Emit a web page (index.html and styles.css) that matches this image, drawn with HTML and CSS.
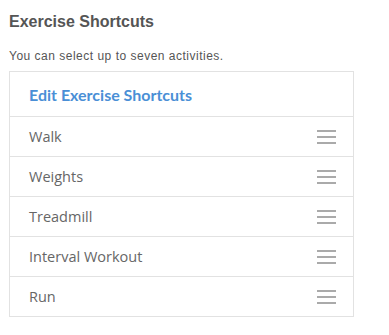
FILE: index.html
```html
<!DOCTYPE html>
<html lang="en">
<head>
    <meta charset="UTF-8">
    <meta name="viewport" content="width=device-width, initial-scale=1.0">
    <title>Exercise Shortcuts</title>
    <link rel="stylesheet" href="styles.css">
</head>
<body>
    <div class="panel">
        <h2 class="title">Exercise Shortcuts</h2>
        <p class="hint">You can select up to seven activities.</p>
        <div class="list">
            <div class="list-head">Edit Exercise Shortcuts</div>
            <div class="item"><span>Walk</span><span class="grip"><i></i><i></i><i></i></span></div>
            <div class="item"><span>Weights</span><span class="grip"><i></i><i></i><i></i></span></div>
            <div class="item"><span>Treadmill</span><span class="grip"><i></i><i></i><i></i></span></div>
            <div class="item"><span>Interval Workout</span><span class="grip"><i></i><i></i><i></i></span></div>
            <div class="item"><span>Run</span><span class="grip"><i></i><i></i><i></i></span></div>
        </div>
    </div>
</body>
</html>
```

FILE: styles.css
```css
* {
    margin: 0;
    padding: 0;
    box-sizing: border-box;
}

body {
    background: #fff;
    font-family: 'Liberation Sans', Arial, sans-serif;
}

.panel {
    padding: 12px 0 0 9px;
    width: 354px;
}

.title {
    font-size: 16px;
    font-weight: bold;
    color: #555;
    line-height: 19px;
}

.hint {
    margin-top: 18px;
    font-size: 12px;
    color: #555;
    letter-spacing: 0.5px;
    line-height: 14px;
}

.list {
    margin-top: 8px;
    border: 1px solid #e2e2e2;
}

.list-head {
    height: 44px;
    padding-left: 19px;
    display: flex;
    align-items: center;
    font-family: Lato, 'Liberation Sans', sans-serif;
    font-size: 16px;
    font-weight: bold;
    color: #4a8fd6;
}

.item {
    height: 40px;
    border-top: 1px solid #e2e2e2;
    padding: 0 17px 0 19px;
    display: flex;
    align-items: center;
    justify-content: space-between;
    font-family: 'Open Sans', 'Liberation Sans', sans-serif;
    font-size: 14.5px;
    color: #666;
}

.grip {
    width: 19px;
    display: flex;
    flex-direction: column;
    gap: 4px;
}

.grip i {
    display: block;
    height: 2px;
    background: #aaa;
}
```
